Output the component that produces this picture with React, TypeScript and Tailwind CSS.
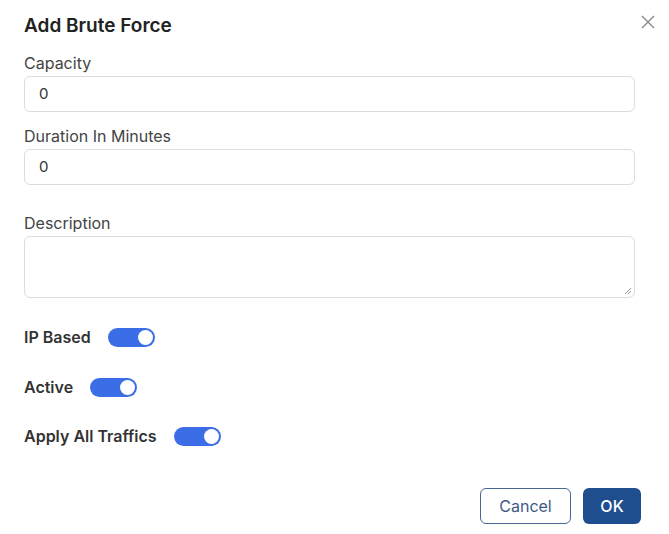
import React from 'react'

const toggles = [
  { label: 'IP Based', mt: 'mt-[29px]' },
  { label: 'Active', mt: 'mt-[30px]' },
  { label: 'Apply All Traffics', mt: 'mt-[29px]' },
]

function Toggle() {
  return (
    <span className="relative inline-block w-[47px] h-[19px] rounded-full bg-[#3b6ee6]">
      <span className="absolute right-[2px] top-[2px] w-[15px] h-[15px] rounded-full bg-white" />
    </span>
  )
}

function Field({ label, value, mt }: { label: string; value: string; mt: string }) {
  return (
    <div className={mt}>
      <label className="block text-[16px] leading-5 text-[#444]">{label}</label>
      <div className="mt-[3px] h-[36px] w-[611px] rounded-md border border-[#dcdcdc] flex items-center pl-[14px] text-[15px] text-[#333]">
        {value}
      </div>
    </div>
  )
}

export default function App() {
  return (
    <div
      className="relative w-[669px] h-[534px] bg-white pl-6 pt-3"
      style={{ fontFamily: 'Inter, "Noto Sans", sans-serif' }}
    >
      <button className="absolute right-[14px] top-[15px] text-[#888]" aria-label="close">
        <svg width="14" height="14" viewBox="0 0 14 14" fill="none" stroke="currentColor" strokeWidth="1.4">
          <path d="M1 1l12 12M13 1L1 13" />
        </svg>
      </button>

      <h2 className="text-[19px] leading-7 font-semibold text-[#222]">Add Brute Force</h2>

      <Field label="Capacity" value="0" mt="mt-[13px]" />
      <Field label="Duration In Minutes" value="0" mt="mt-[14px]" />

      <div className="mt-[28px]">
        <label className="block text-[16px] leading-5 text-[#444]">Description</label>
        <div className="relative mt-[3px] h-[62px] w-[611px] rounded-md border border-[#dcdcdc]">
          <svg className="absolute right-[2px] bottom-[2px]" width="8" height="8" viewBox="0 0 8 8" stroke="#999" strokeWidth="1">
            <path d="M7 1L1 7M7 4L4 7" />
          </svg>
        </div>
      </div>

      {toggles.map((t) => (
        <div key={t.label} className={`${t.mt} flex items-center gap-[17px]`}>
          <span className="text-[16px] leading-5 font-semibold text-[#333]">{t.label}</span>
          <Toggle />
        </div>
      ))}

      <div className="absolute right-[28px] top-[488px] flex gap-[12px]">
        <button className="w-[91px] h-[36px] rounded-md border border-[#4a6794] text-[16px] text-[#3d5a85] bg-white">
          Cancel
        </button>
        <button className="w-[58px] h-[36px] rounded-md bg-[#1f4e8e] text-[16px] font-medium text-white">
          OK
        </button>
      </div>
    </div>
  )
}
